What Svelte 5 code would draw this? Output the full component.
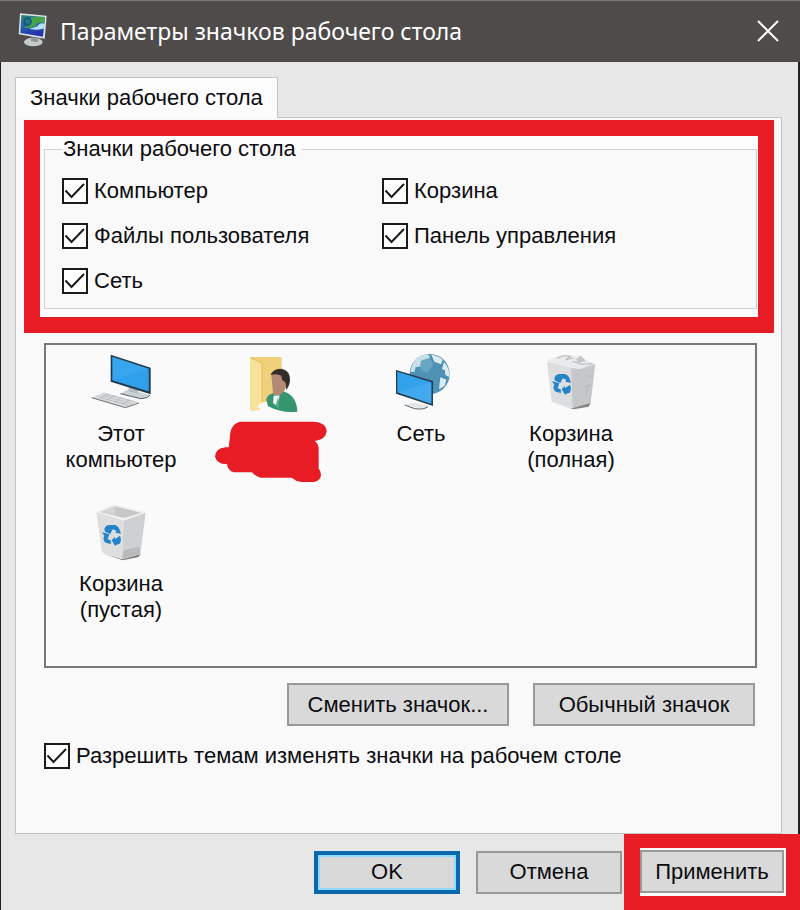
<script lang="ts">
    type Option = { id: string; label: string; checked: boolean }

    let options: Option[] = $state([
        { id: 'computer', label: 'Компьютер', checked: true },
        { id: 'bin', label: 'Корзина', checked: true },
        { id: 'files', label: 'Файлы пользователя', checked: true },
        { id: 'panel', label: 'Панель управления', checked: true },
        { id: 'network', label: 'Сеть', checked: true }
    ])
    let themes: Option = $state({ id: 'themes', label: 'Разрешить темам изменять значки на рабочем столе', checked: true })

    const icons = [
        { kind: 'pc', lines: ['Этот', 'компьютер'], viewBox: '-12 33 450 192' },
        { kind: 'user', lines: [], viewBox: '-12 33 450 192' },
        { kind: 'net', lines: ['Сеть'], viewBox: '-72 30 450 192' },
        { kind: 'full', lines: ['Корзина', '(полная)'], viewBox: '-42 33 450 192' },
        { kind: 'empty', lines: ['Корзина', '(пустая)'], viewBox: '-12 30 450 192' }
    ]
</script>

{#snippet check(option: Option)}
    <label class="check" for={option.id}>
        <span class="box">
            <input type="checkbox" id={option.id} bind:checked={option.checked} />
            {#if option.checked}
                <svg viewBox="0 0 26 26" aria-hidden="true"><path d="M3.5 12.5L9.5 19L22 6" /></svg>
            {/if}
        </span>
        <span>{option.label}</span>
    </label>
{/snippet}

{#snippet recycle()}
    <g fill="#2384c8">
        <path d="M133 116Q137 106 149 105L164 105Q174 107 179 119L183 131L166 128L169 122L158 118L151 132L135 125Z" />
        <path d="M126 127L148 132L146 139L143 148L152 151L153 162L140 159Q132 156 130 146L133 137Z" />
        <path d="M155 151L164 141L166 147L180 137Q186 151 179 161L167 165L166 169Z" />
    </g>
{/snippet}

<main>
    <header>
        <svg class="logo" viewBox="0 0 90 105" aria-hidden="true">
            <defs>
                <linearGradient id="screen" x1="0" y1="0" x2="0.3" y2="1">
                    <stop offset="0" stop-color="#31856b" />
                    <stop offset="0.45" stop-color="#246aa9" />
                    <stop offset="1" stop-color="#2430ad" />
                </linearGradient>
            </defs>
            <ellipse cx="49" cy="87" rx="28" ry="13" fill="#c6c9ca" />
            <path d="M41 72L64 76L62 88L42 84Z" fill="#8e9395" />
            <path d="M9 1L89 8L83 77L5 64Z" fill="#dce6e8" />
            <path d="M13 6L84 12L78 71L10 60Z" fill="url(#screen)" />
            <path d="M44 12L84 12L81 32Q65 22 56 40Q37 48 20 43Q40 37 44 12Z" fill="#45a34b" />
            <path d="M82 33Q69 26 61 40Q47 47 34 46Q53 54 80 47Z" fill="#b8dfff" />
            <path d="M24 18Q35 10 42 22Q43 35 30 38Q19 33 24 18Z" fill="none" stroke="#155c73" stroke-width="5" />
        </svg>
        <h1>Параметры значков рабочего стола</h1>
        <button class="close" aria-label="Закрыть">
            <svg viewBox="0 0 22 22"><path d="M1 1L21 21M21 1L1 21" /></svg>
        </button>
    </header>

    <div class="body">
        <div role="tablist">
            <button class="tab" role="tab" aria-selected="true">Значки рабочего стола</button>
        </div>
        <section class="page">
            <div class="highlight">
                <fieldset>
                    <legend>Значки рабочего стола</legend>
                    <div class="options">
                        {#each options as option (option.id)}
                            {@render check(option)}
                        {/each}
                    </div>
                </fieldset>
            </div>

            <div class="icons">
                {#each icons as icon (icon.kind)}
                    <div class="icon">
                        <svg class="picture" viewBox={icon.viewBox} aria-hidden="true">
                            {#if icon.kind === 'pc'}
                                <path d="M211 164L235 151L300 168L291 176L272 179Z" fill="#cbd2d6" />
                                <path d="M211 164L272 179L291 176L300 168" fill="none" stroke="#56636a" stroke-width="3" />
                                <path d="M235 144L265 152L264 164L238 158Z" fill="#b4bdc2" />
                                <path d="M182 47L302 86V166L182 128Z" fill="#24394a" />
                                <path d="M187 53L296 89V157L187 124Z" fill="#38a5ef" />
                                <path d="M187 124L296 89V157Z" fill="#259be8" opacity="0.5" />
                                <path d="M125 176L161 160L267 190L226 206Z" fill="#d8dadb" />
                                <path d="M125 176L226 206L267 192" fill="none" stroke="#6e7375" stroke-width="3" />
                                <path d="M149 175L235 199M160 170L244 194M171 166L253 188M149 176L173 165M170 183L194 170M192 190L216 176M214 196L238 183" stroke="#b0b4b6" stroke-width="2" />
                            {:else if icon.kind === 'user'}
                                <path d="M150 54H245V186L184 190L151 211Z" fill="#efd17b" />
                                <path d="M150 54L186 73V191L180 213L152 217Z" fill="#f8e29a" />
                                <path d="M152 56L186 73V190" fill="none" stroke="#e2bb5c" stroke-width="3" />
                                <path d="M173 207L181 190L187 207Z" fill="#f5fbff" />
                                <path d="M199 183Q199 170 218 163L250 157Q290 169 292 218Q248 224 204 202Z" fill="#36956f" />
                                <path d="M221 170L239 169L232 202L219 192Z" fill="#f2f6f4" />
                                <path d="M234 174L237 209L227 201Z" fill="#57ac89" />
                                <path d="M214 109Q225 94 252 103L262 132Q255 160 239 169Q221 172 219 161Z" fill="#b28a74" />
                                <path d="M211 108Q223 86 247 90Q271 96 270 124Q268 145 258 152Q261 127 247 124L244 110Q232 102 211 108Z" fill="#332d29" />
                            {:else if icon.kind === 'net'}
                                <circle cx="179" cy="102" r="60" fill="#4f91b4" />
                                <path d="M121 95Q129 47 174 43L180 52L165 64L157 78L137 82L133 96Z" fill="#c9e0e9" />
                                <path d="M184 44Q205 47 218 59L213 73L193 65ZM222 66Q240 84 238 111L226 105L225 91L216 87ZM211 112L229 119L224 137L207 148Z" fill="#dcebf0" />
                                <path d="M152 62L179 53L190 75L171 98L151 90Z" fill="#68a6c2" />
                                <path d="M104 195L129 188L179 197L162 207Z" fill="#e1e6e8" />
                                <path d="M104 195L134 206Q161 210 174 200" fill="none" stroke="#59646b" stroke-width="3" />
                                <path d="M78 90L189 123V198L78 161Z" fill="#233e50" />
                                <path d="M82 95L184 127V191L82 157Z" fill="#33a2ed" />
                                <path d="M82 157L184 127V191Z" fill="#53b0f0" opacity="0.5" />
                            {:else if icon.kind === 'full'}
                                <path d="M127 189L184 208L243 190L236 203L190 211Z" fill="#858585" />
                                <path d="M111 68L183 84L187 207L125 188Z" fill="#dddedf" />
                                <path d="M183 84L256 75L242 192L187 207Z" fill="#c6c7c9" />
                                <path d="M110 65L151 50L184 48L196 52L215 50L230 64L256 74L209 91L180 86Z" fill="#e9eaeb" />
                                <path d="M140 57L163 50L182 52L167 62L190 57M188 67L213 76L247 74M209 51L225 65L205 70" fill="none" stroke="#b3b5b6" stroke-width="3" />
                                <path d="M199 59L214 52L226 67L202 73Z" fill="#c5c7c9" />
                                <path d="M226 110L247 112M222 144L245 137M229 164L235 137" stroke="#b0b2b5" stroke-width="2" />
                                {@render recycle()}
                            {:else}
                                <path d="M155 188L217 208L272 192L265 201L218 211Z" fill="#777" />
                                <path d="M139 66L221 91L216 207L156 187Z" fill="#dddedf" />
                                <path d="M221 91L287 68L271 192L216 207Z" fill="#cfd0d1" />
                                <path d="M139 65L193 43L287 67L221 92Z" fill="#f0f0f0" />
                                <path d="M151 66L194 49L274 68L222 84Z" fill="#c6c7c6" />
                                <path d="M151 66L194 49V78Z" fill="#d6d4d1" />
                                <path d="M222 181L267 170L271 191L216 206Z" fill="#b8babc" />
                                <g transform="translate(30 0)">{@render recycle()}</g>
                            {/if}
                        </svg>
                        {#if icon.kind === 'user'}
                            <svg class="scribble" viewBox="51 240 336 183" aria-hidden="true">
                                <path d="M125 242H345Q385 244 386 271Q384 296 350 300Q362 308 362 325V383Q371 391 368 408Q361 424 342 423H310Q292 420 281 410H187Q174 407 162 394H108Q89 389 87 369Q57 370 51 347Q53 322 82 319H92Q95 301 96 281Q99 249 125 242Z" />
                            </svg>
                        {:else}
                            {#each icon.lines as line}
                                <span>{line}</span>
                            {/each}
                        {/if}
                    </div>
                {/each}
            </div>

            <div class="actions">
                <button class="push wide">Сменить значок...</button>
                <button class="push wide">Обычный значок</button>
            </div>
            {@render check(themes)}
        </section>
    </div>

    <footer>
        <button class="push default">OK</button>
        <button class="push">Отмена</button>
        <div class="apply">
            <button class="push">Применить</button>
        </div>
    </footer>
</main>

<style>
    :global(body) {
        margin: 0;
        background: #e8e7e7;
    }
    main {
        background: #e8e7e7;
        color: #0c0c10;
        font-family: "Liberation Sans", Arial, sans-serif;
        font-size: 22px;
        line-height: 26px;
        border-bottom: 1px solid #222;
    }
    button {
        font: inherit;
        color: inherit;
        margin: 0;
    }
    header {
        display: flex;
        align-items: center;
        height: 62px;
        box-sizing: border-box;
        padding: 0 21px 2px 17px;
        background: #4e4b4a;
        border-top: 1px solid #777;
        color: #fff;
    }
    .logo {
        width: 30px;
        height: 35px;
    }
    h1 {
        flex: 1;
        margin: 0 0 0 13px;
        font-family: "Noto Sans", "Open Sans", sans-serif;
        font-size: 23px;
        font-weight: 400;
    }
    .close {
        display: flex;
        padding: 0;
        border: none;
        background: none;
    }
        .close svg {
            width: 22px;
            height: 22px;
            fill: none;
            stroke: #fff;
            stroke-width: 2;
        }

    .body {
        padding: 15px 16px 0 14px;
        border-left: 1px solid #222;
        border-right: 2px solid #222;
    }
    .tab {
        position: relative;
        display: block;
        height: 41px;
        margin-bottom: -1px;
        padding: 0 14px;
        border: 1px solid #c4c4c6;
        border-bottom: none;
        background: #fcfcfc;
    }
    .page {
        padding: 2px 7px 64px 8px;
        border: 1px solid #c4c4c6;
        background: #f9f9f9;
    }
    .highlight {
        padding: 0 1px 8px 4px;
        border: 16px solid #e81c25;
        background: #fdfdfd;
    }
    fieldset {
        margin: 0;
        padding: 0 17px 14px;
        border: 1px solid #cfcfcf;
        background: #f9f9f9;
    }
    legend {
        padding: 0 6px 0 1px;
    }
    .options {
        display: grid;
        grid-template-columns: 320px 1fr;
        row-gap: 19px;
        padding-top: 16px;
    }
    .check {
        display: flex;
        align-items: center;
        gap: 6px;
    }
    .box {
        display: grid;
        width: 26px;
        height: 26px;
    }
        .box > * {
            grid-area: 1 / 1;
        }
        .box input {
            appearance: none;
            width: 26px;
            height: 26px;
            margin: 0;
            border: 2px solid #1b1b1b;
            background: #fff;
        }
        .box svg {
            z-index: 1;
            fill: none;
            stroke: #1b1b1b;
            stroke-width: 2;
            pointer-events: none;
        }

    .icons {
        display: grid;
        grid-template-columns: repeat(auto-fill, 150px);
        grid-auto-rows: 150px;
        margin: 10px 17px 0 20px;
        padding-bottom: 21px;
        border: 2px solid #77777a;
        background: #fafafa;
    }
    .icon {
        display: flex;
        flex-direction: column;
        align-items: center;
        padding-top: 5px;
    }
    .picture {
        width: 150px;
        height: 64px;
        margin-bottom: 7px;
    }
    .scribble {
        width: 112px;
        height: 61px;
        fill: #e81c25;
    }
    .actions {
        display: flex;
        justify-content: flex-end;
        gap: 24px;
        margin: 15px 19px 17px 0;
    }
    .page > .check {
        margin-left: 20px;
    }
    .push {
        box-sizing: border-box;
        width: 146px;
        height: 43px;
        padding: 0;
        border: 2px solid #999;
        background: #d9d9d9;
    }
    .wide {
        width: 222px;
    }
    .default {
        border: 4px solid #0b68ad;
        box-shadow: inset 0 0 0 2px #8fdcfa;
    }
    footer {
        display: flex;
        justify-content: flex-end;
        align-items: center;
        gap: 16px;
        border-left: 1px solid #222;
    }
    .apply {
        margin-left: -14px;
        padding: 2px 2px 3px 0;
        border: 14px solid #e81c25;
        border-left-width: 16px;
        background: #fafafa;
    }
        .apply .push {
            width: 144px;
        }
</style>
